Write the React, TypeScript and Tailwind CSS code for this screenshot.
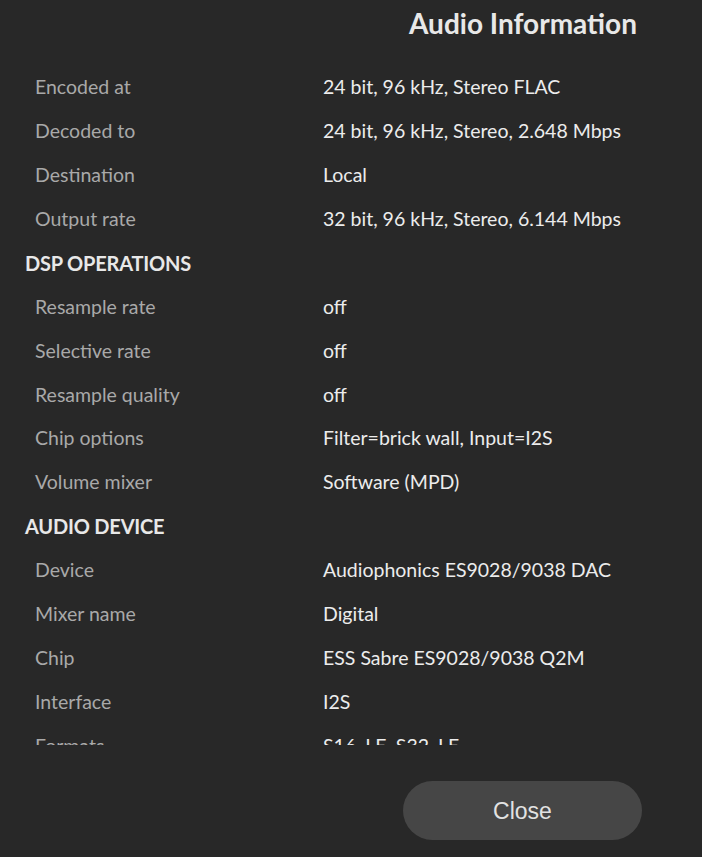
const sections: { title?: string; rows: [string, string][] }[] = [
  {
    rows: [
      ['Encoded at', '24 bit, 96 kHz, Stereo FLAC'],
      ['Decoded to', '24 bit, 96 kHz, Stereo, 2.648 Mbps'],
      ['Destination', 'Local'],
      ['Output rate', '32 bit, 96 kHz, Stereo, 6.144 Mbps'],
    ],
  },
  {
    title: 'DSP OPERATIONS',
    rows: [
      ['Resample rate', 'off'],
      ['Selective rate', 'off'],
      ['Resample quality', 'off'],
      ['Chip options', 'Filter=brick wall, Input=I2S'],
      ['Volume mixer', 'Software (MPD)'],
    ],
  },
  {
    title: 'AUDIO DEVICE',
    rows: [
      ['Device', 'Audiophonics ES9028/9038 DAC'],
      ['Mixer name', 'Digital'],
      ['Chip', 'ESS Sabre ES9028/9038 Q2M'],
      ['Interface', 'I2S'],
      ['Formats', 'S16_LE, S32_LE'],
    ],
  },
];

export default function App() {
  return (
    <div className="h-[857px] w-[702px] overflow-hidden bg-[#282828] font-['Lato',sans-serif] text-[#e6e6e6]">
      <div className="flex h-[46px] items-center justify-end pr-[65px]">
        <h1 className="text-[28px] font-bold text-[#e8e8e8]">Audio Information</h1>
      </div>

      <div className="h-[699px] overflow-hidden pt-[19px]">
        {sections.map((section, i) => (
          <div key={i}>
            {section.title && (
              <div className="flex h-[43.9px] items-center pl-[25px] text-[20px] font-bold tracking-[-0.2px] text-[#e8e8e8]">
                {section.title}
              </div>
            )}
            {section.rows.map(([label, value]) => (
              <div key={label} className="flex h-[43.9px] items-center text-[19.5px]">
                <span className="w-[323px] shrink-0 pl-[35px] text-[#a9a9a9]">{label}</span>
                <span className="text-[#ececec]">{value}</span>
              </div>
            ))}
          </div>
        ))}
      </div>

      <div className="flex justify-end pr-[60px] pt-[36px]">
        <button className="h-[59px] w-[239px] rounded-full bg-[#464646] pt-[2px] font-['Liberation_Sans',Arial,sans-serif] text-[23px] text-[#e2e2e2]">
          Close
        </button>
      </div>
    </div>
  );
}
